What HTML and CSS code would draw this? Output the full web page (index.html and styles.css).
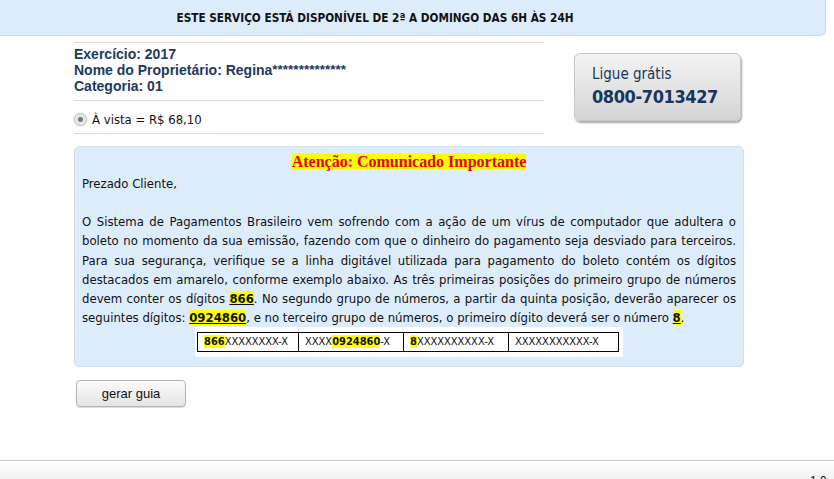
FILE: index.html
```html
<!DOCTYPE html>
<html lang="pt">
<head>
<meta charset="utf-8">
<title>Guia</title>
<link rel="stylesheet" href="styles.css">
</head>
<body>
<div class="banner"><span>ESTE SERVIÇO ESTÁ DISPONÍVEL DE 2ª A DOMINGO DAS 6H ÀS 24H</span></div>
<div class="main">
  <div class="top">
    <div class="info">
      <div class="owner">
        <div>Exercício: 2017</div>
        <div>Nome do Proprietário: Regina<span class="stars">**************</span></div>
        <div>Categoria: 01</div>
      </div>
      <label class="option"><span class="radio"><span class="dot"></span></span>À vista = R$ 68,10</label>
    </div>
    <div class="phone">
      <div class="ligue">Ligue grátis</div>
      <div class="num">0800-7013427</div>
    </div>
  </div>
  <div class="notice">
    <div class="title"><span>Atenção: Comunicado Importante</span></div>
    <p>Prezado Cliente,</p>
    <p class="gap">O Sistema de Pagamentos Brasileiro vem sofrendo com a ação de um vírus de computador que adultera o boleto no momento da sua emissão, fazendo com que o dinheiro do pagamento seja desviado para terceiros. Para sua segurança, verifique se a linha digitável utilizada para pagamento do boleto contém os dígitos destacados em amarelo, conforme exemplo abaixo. As três primeiras posições do primeiro grupo de números devem conter os dígitos <b class="hl u">866</b>. No segundo grupo de números, a partir da quinta posição, deverão aparecer os seguintes dígitos: <b class="hl u">0924860</b>, e no terceiro grupo de números, o primeiro dígito deverá ser o número <b class="hl u">8</b>.</p>
    <div class="sample">
      <table>
        <tr>
          <td class="c1"><b class="hl">866</b>XXXXXXXX-X</td>
          <td class="c2">XXXX<b class="hl">0924860</b>-X</td>
          <td class="c3"><b class="hl">8</b>XXXXXXXXXX-X</td>
          <td class="c4">XXXXXXXXXXX-X</td>
        </tr>
      </table>
    </div>
  </div>
  <button class="btn" type="button">gerar guia</button>
</div>
<div class="footer"><span>1.0</span></div>
</body>
</html>
```
FILE: styles.css
```css
html, body { margin: 0; padding: 0; background: #fff; }
body {
  font-family: "DejaVu Sans Condensed", "DejaVu Sans", sans-serif;
  font-size: 13px;
  color: #111;
  width: 834px;
  height: 479px;
  overflow: hidden;
  position: relative;
}
.banner {
  width: 750px;
  padding-right: 75px;
  height: 35px;
  background: #ddecfb;
  border-right: 1px solid #cbd9e6;
  border-bottom: 1px solid #cbd9e6;
  border-bottom-right-radius: 6px;
  display: flex;
  align-items: center;
  justify-content: center;
  font-weight: bold;
  font-size: 11.7px;
  color: #111;
}
.main { margin-left: 74px; width: 670px; }
.top { display: flex; margin-top: 6px; }
.info { width: 470px; }
.owner {
  border-top: 1px solid #dcdcdc;
  border-bottom: 1px solid #dcdcdc;
  padding: 3px 0 6px;
  font-family: "Liberation Sans", Arial, sans-serif;
  font-weight: bold;
  font-size: 14px;
  line-height: 16px;
  color: #1d3a5c;
}
.stars { font-size: 13.5px; font-weight: bold; vertical-align: 1px; }
.option {
  display: flex;
  align-items: center;
  height: 33px;
  padding-top: 4px;
  box-sizing: border-box;
  border-bottom: 1px solid #dcdcdc;
  color: #111;
}
.radio {
  width: 11px; height: 11px; border-radius: 50%;
  background: #e6e6e6; border: 1px solid #c4c4c4;
  display: inline-flex; align-items: center; justify-content: center;
  margin-right: 5px;
  box-shadow: 0 0 0 1px #eee;
}
.dot { width: 5px; height: 5px; border-radius: 50%; background: #777; }
.phone {
  margin-left: 30px;
  margin-top: 11px;
  width: 167px;
  height: 68px;
  box-sizing: border-box;
  border-radius: 6px;
  background: linear-gradient(#f3f3f3, #dedede 70%, #d4d4d4);
  border: 1px solid #c8c8c8;
  box-shadow: 1px 2px 2px rgba(0,0,0,0.35);
  padding: 11px 0 0 17px;
  font-family: "DejaVu Sans Condensed", "DejaVu Sans", sans-serif;
  color: #17365d;
  white-space: nowrap;
}
.ligue { font-size: 15px; line-height: 18px; }
.num { font-size: 18px; line-height: 27px; font-weight: bold; letter-spacing: -0.4px; }
.notice {
  margin-top: 12px;
  background: #ddecfb;
  border: 1px solid #d2dfeb;
  border-radius: 5px;
  padding: 5px 7px 0;
  height: 221px;
  box-sizing: border-box;
}
.title { text-align: center; line-height: 19px; }
.title span {
  background: #ffff00;
  color: #e60000;
  font-family: "Liberation Serif", "Times New Roman", serif;
  font-weight: bold;
  font-size: 16px;
}
p { margin: 0; line-height: 19.2px; text-align: justify; }
p:first-of-type { margin-top: 2px; }
p.gap { margin-top: 19px; }
.hl { background: #ffff00; font-weight: bold; }
.u { text-decoration: underline; }
.sample {
  width: 428px;
  margin: 0 auto;
  background: #fff;
  padding: 5px 2px 5px 2px;
  box-sizing: border-box;
}
table { border-collapse: collapse; font-size: 11px; }
td {
  border: 1px solid #000;
  height: 18px;
  padding: 0 0 0 6px;
  white-space: nowrap;
  line-height: 18px;
}
td .hl { font-weight: bold; }
.c1 { width: 94px; }
.c2 { width: 98px; }
.c3 { width: 98px; }
.c4 { width: 103px; }
.btn {
  margin: 13px 0 0 2px;
  width: 110px;
  height: 27px;
  border: 1px solid #b4b4b4;
  border-radius: 4px;
  background: linear-gradient(#fbfbfb, #e4e4e4);
  box-shadow: 0 1px 1px rgba(0,0,0,0.15);
  font-family: "Liberation Sans", Arial, sans-serif;
  font-size: 13px;
  color: #111;
}
.footer {
  position: absolute;
  left: 0; right: 0; top: 460px; height: 19px;
  border-top: 1px solid #c9c9c9;
  background: linear-gradient(#fff, #f1f1f1);
  font-family: "Liberation Sans", Arial, sans-serif;
  font-size: 12px;
}
.footer span { position: absolute; left: 810px; top: 13px; }
```
